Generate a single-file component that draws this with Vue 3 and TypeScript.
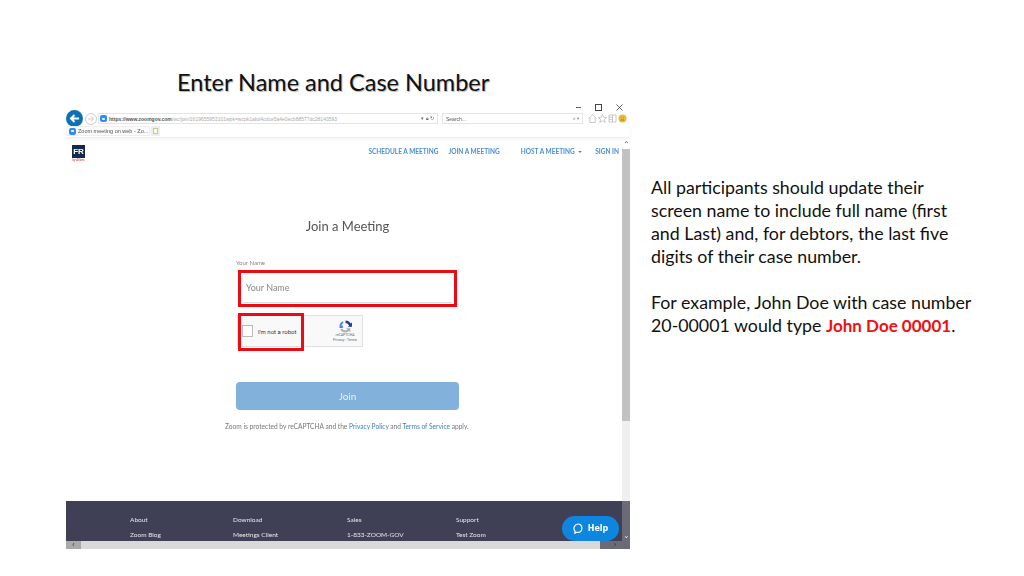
<script setup lang="ts">
const footerColumns = [
  { title: 'About', links: ['Zoom Blog', 'Customers'] },
  { title: 'Download', links: ['Meetings Client', 'Zoom Rooms Client'] },
  { title: 'Sales', links: ['1-833-ZOOM-GOV', 'Contact Sales'] },
  { title: 'Support', links: ['Test Zoom', 'Account'] },
]
</script>

<template>
  <div class="slide">
    <h1 class="title">Enter Name and Case Number</h1>
    <div class="content">
      <div class="browser">
        <div class="window-controls">
          <span class="win-min"></span>
          <span class="win-max"></span>
          <svg class="win-close" width="7" height="7" viewBox="0 0 7 7">
            <path d="M.5.5l6 6M6.500.5l-6 6" stroke="#444" stroke-width=".8" />
          </svg>
        </div>
        <div class="toolbar">
          <svg class="back" width="17" height="17" viewBox="0 0 17 17">
            <circle cx="8.500" cy="8.500" r="8.500" fill="#0e6fb5" />
            <path d="M13 8.500H5M8.500 5L5 8.500 8.500 12" fill="none" stroke="#fff" stroke-width="2" />
          </svg>
          <svg class="forward" width="12" height="12" viewBox="0 0 12 12">
            <circle cx="6" cy="6" r="5.500" fill="#fff" stroke="#ccc" />
            <path d="M3 6h5M6 3.500L8.500 6 6 8.500" fill="none" stroke="#ccc" />
          </svg>
          <div class="address">
            <span class="zoom-icon"></span>
            <span class="url"><b>https://www.zoomgov.com</b>/wc/join/1619655953101wpk=wcpk1abd4cdce5a4e0ecb88577dc28143593</span>
            <span class="address-tools">▾ 🔒︎ ↻</span>
          </div>
          <div class="search">
            <span>Search...</span>
            <span class="search-tools">⌕ ▾</span>
          </div>
          <div class="tools">
            <svg width="9" height="9" viewBox="0 0 9 9"><path d="M.5 4.500L4.500.8l4 3.700M1.800 4v4.500h5.400V4" fill="none" stroke="#bbb" stroke-width=".8" /></svg>
            <svg width="9" height="9" viewBox="0 0 9 9"><path d="M4.500.5l1.200 2.800 3 .2-2.300 1.900.8 3-2.700-1.600-2.700 1.600.8-3L.3 3.500l3-.2z" fill="none" stroke="#bbb" stroke-width=".8" /></svg>
            <svg width="9" height="9" viewBox="0 0 9 9"><path d="M1 1h7v7H1zM4.500 1v7M1 3.300h3.500M1 5.600h3.500" fill="none" stroke="#bbb" stroke-width=".8" /></svg>
            <svg width="9" height="9" viewBox="0 0 9 9"><circle cx="4.500" cy="4.500" r="4" fill="#e8b93a" /><path d="M3 3.500h.5M5.500 3.500H6M3 6h3" stroke="#8a6a12" stroke-width=".7" /></svg>
          </div>
        </div>
        <div class="tabs">
          <div class="tab">
            <span class="zoom-icon"></span>
            <span>Zoom meeting on web - Zo...</span>
            <span class="tab-close">×</span>
          </div>
          <div class="new-tab"><span></span></div>
        </div>
        <div class="viewport">
          <div class="page-row">
            <div class="page">
              <header class="site-header">
                <div class="logo">
                  <div class="logo-mark">FR</div>
                  <div class="logo-sub">by Alliant</div>
                </div>
                <nav class="nav">
                  <a class="nav-schedule">SCHEDULE A MEETING</a>
                  <a class="nav-join">JOIN A MEETING</a>
                  <a class="nav-host">HOST A MEETING <i class="caret"></i></a>
                  <a class="nav-sign">SIGN IN</a>
                </nav>
              </header>
              <main class="join">
                <h2 class="join-title">Join a Meeting</h2>
                <label class="name-label">Your Name</label>
                <div class="name-input"><span>Your Name</span></div>
                <div class="recaptcha">
                  <span class="check"></span>
                  <span class="robot">I'm not a robot</span>
                  <div class="recaptcha-brand">
                    <svg width="13" height="13" viewBox="0 0 13 13">
                      <path d="M6.500.5a6 6 0 0 1 5.200 3l1.300-1v4.200H8.800l1.300-1.300a3.900 3.900 0 0 0-3.600-2.500z" fill="#1c3aa9" />
                      <path d="M.5 6.500a6 6 0 0 1 3-5.200l1 1.500a3.900 3.900 0 0 0-1.900 3.700l1.300-1.300v2.800H.5z" fill="#4285f4" />
                      <path d="M6.500 12.500a6 6 0 0 1-5.200-3l1.700-1a3.900 3.900 0 0 0 3.500 2l2-1-1.400-1.300h4.200v4l-1.300-1.200a6 6 0 0 1-3.500 1.500z" fill="#ababab" />
                    </svg>
                    <span class="brand-name">reCAPTCHA</span>
                    <span class="brand-links">Privacy - Terms</span>
                  </div>
                  <div class="red-box robot-box"></div>
                </div>
                <button class="join-btn">Join</button>
                <p class="protected">Zoom is protected by reCAPTCHA and the <a>Privacy Policy</a> and <a>Terms of Service</a> apply.</p>
              </main>
              <footer class="site-footer">
                <div v-for="col in footerColumns" :key="col.title" class="footer-col">
                  <div class="footer-title">{{ col.title }}</div>
                  <div v-for="link in col.links" :key="link" class="footer-link">{{ link }}</div>
                </div>
              </footer>
              <div class="help">
                <svg width="11" height="11" viewBox="0 0 11 11">
                  <path d="M5.500 1a4.300 4.300 0 0 1 0 8.400H2.800l-.9 1 .1-2.300A4.300 4.300 0 0 1 5.500 1z" fill="none" stroke="#fff" stroke-width="1.200" />
                </svg>
                <span>Help</span>
              </div>
            </div>
            <div class="v-scroll">
              <span class="v-up">⌃</span>
              <div class="v-thumb"></div>
              <div class="v-track"></div>
              <span class="v-down">⌄</span>
            </div>
          </div>
          <div class="h-scroll">
            <span class="h-left">‹</span>
            <div class="h-thumb"></div>
            <span class="h-right">›</span>
          </div>
        </div>
      </div>
      <div class="notes">
        <p>All participants should update their screen name to include full name (first and Last) and, for debtors, the last five digits of their case number.</p>
        <p>For example, John Doe with case number 20-00001 would type <strong>John Doe 00001</strong>.</p>
      </div>
    </div>
  </div>
</template>

<style scoped>
.slide {
  width: 1024px;
  height: 576px;
  overflow: hidden;
  background: #fff;
  font-family: Lato, sans-serif;
  box-sizing: border-box;
  padding-top: 66px;
}

.title {
  margin: 0 0 0 177px;
  font-size: 23.5px;
  line-height: 32px;
  font-weight: 400;
  color: #111;
  text-shadow: 1px 1px 1px rgba(0, 0, 0, 0.3);
}

.content {
  display: flex;
  margin-top: 5px;
  padding-left: 65px;
}

.browser {
  width: 565px;
  height: 446px;
  flex: none;
  display: flex;
  flex-direction: column;
  font-family: "Liberation Sans", sans-serif;
  filter: blur(0.35px);
}

.window-controls {
  height: 8px;
  display: flex;
  justify-content: flex-end;
  align-items: center;
  gap: 14px;
  padding-right: 7px;
}

.win-min { width: 5px; height: 1px; background: #666; }
.win-max { width: 5px; height: 5px; border: 1px solid #444; }

.toolbar {
  height: 15px;
  display: flex;
  align-items: center;
  padding-left: 1px;
}

.forward { margin-left: 2px; }

.address,
.search {
  height: 11px;
  display: flex;
  align-items: center;
  background: #fff;
  border: 1px solid #e4e4e4;
  font-size: 5px;
  color: #777;
  box-sizing: border-box;
}

.address {
  width: 340px;
  margin-left: 1px;
  padding: 0 3px 0 1px;
  gap: 2px;
}

.url {
  flex: 1;
  white-space: nowrap;
  overflow: hidden;
  color: #aaa;
}

.url b { color: #555; }
.address-tools { color: #666; }

.search {
  width: 141px;
  margin-left: 4px;
  padding: 0 3px;
  justify-content: space-between;
  color: #555;
  font-size: 5px;
}

.tools {
  display: flex;
  gap: 1px;
  margin-left: 5px;
}

.zoom-icon {
  position: relative;
  display: inline-block;
  flex: none;
  width: 7px;
  height: 7px;
  border-radius: 2px;
  background: #2d8cff;
}

.zoom-icon::after {
  content: "";
  position: absolute;
  left: 2px;
  top: 2.5px;
  width: 3px;
  height: 2px;
  background: #fff;
  border-radius: 1px;
}

.tabs {
  height: 11px;
  display: flex;
  align-items: flex-start;
  padding-left: 1px;
  box-shadow: 0 2px 3px rgba(0, 0, 0, 0.07);
  position: relative;
}

.tab {
  width: 84px;
  height: 10px;
  display: flex;
  align-items: center;
  gap: 2px;
  box-sizing: border-box;
  padding: 0 2px;
  background: #fbfbfb;
  border: 1px solid #eeeeee;
  font-size: 5.500px;
  color: #555;
  white-space: nowrap;
}

.tab-close { margin-left: auto; font-size: 6px; }

.new-tab {
  width: 9px;
  height: 10px;
  margin-left: 1px;
  background: #eee;
  display: flex;
  justify-content: center;
  align-items: center;
}

.new-tab span {
  width: 5px;
  height: 6px;
  background: #fffbe0;
  border: 1px solid #c8c8a0;
  box-sizing: border-box;
}

.viewport {
  flex: 1;
  display: flex;
  flex-direction: column;
  min-height: 0;
}

.page-row {
  flex: 1;
  display: flex;
  min-height: 0;
}

.page {
  position: relative;
  width: 557px;
  margin-left: 1px;
  display: flex;
  flex-direction: column;
  font-family: Lato, sans-serif;
  overflow: hidden;
}

.site-header {
  height: 42px;
  display: flex;
  align-items: flex-start;
  flex: none;
  padding: 8px 3px 0 6px;
  box-sizing: border-box;
}

.logo {
  width: 13px;
  display: flex;
  flex-direction: column;
  align-items: center;
}

.logo-mark {
  width: 13px;
  height: 13px;
  background: #15294b;
  color: #fff;
  font-size: 8px;
  line-height: 13px;
  font-weight: 900;
  text-align: center;
  font-family: "Liberation Sans", sans-serif;
}

.logo-sub {
  font-size: 3px;
  line-height: 5px;
  white-space: nowrap;
  color: #c8303a;
}

.nav {
  margin-left: auto;
  display: flex;
  padding-top: 3px;
  font-size: 6.500px;
  line-height: 8px;
  font-weight: 700;
  color: #4a8ed4;
  white-space: nowrap;
}

.nav-join { margin-left: 10px; }
.nav-host { margin-left: 21px; }
.nav-sign { margin-left: 13px; }

.caret {
  display: inline-block;
  margin-left: 2px;
  vertical-align: middle;
  border: 2px solid transparent;
  border-top-color: #4a8ed4;
  border-bottom: 0;
}

.join {
  flex: 1;
  display: flex;
  flex-direction: column;
  align-items: flex-start;
  padding-left: 170px;
  min-height: 0;
}

.join-title {
  margin: 38px 0 0;
  width: 223px;
  text-align: center;
  font-size: 13px;
  line-height: 18px;
  font-weight: 400;
  color: #555;
}

.name-label {
  margin-top: 24px;
  font-size: 6px;
  line-height: 8px;
  color: #888;
}

.name-input {
  width: 219px;
  height: 37px;
  margin: 3px 0 0 2px;
  box-sizing: border-box;
  border: 3px solid #ed0a12;
  padding: 0 2px;
  position: relative;
  display: flex;
  align-items: center;
  font-size: 9px;
  color: #888;
}

.name-input span {
  flex: 1;
  height: 28px;
  line-height: 28px;
  padding-left: 3px;
  border-bottom: 1px solid #ddd;
}

.recaptcha {
  position: relative;
  width: 126px;
  height: 32px;
  margin: 8px 0 0 1px;
  flex: none;
  box-sizing: border-box;
  background: #f9f9f9;
  border: 1px solid #e0e0e0;
  display: flex;
  align-items: center;
  padding-left: 4px;
  font-family: Roboto, sans-serif;
}

.check {
  width: 11px;
  height: 12px;
  box-sizing: border-box;
  background: #fff;
  border: 1px solid #bbb;
}

.robot {
  margin-left: 5px;
  font-size: 6px;
  color: #333;
}

.recaptcha-brand {
  margin-left: auto;
  width: 34px;
  display: flex;
  flex-direction: column;
  align-items: center;
  font-size: 3.500px;
  line-height: 5px;
  color: #666;
}

.brand-links { white-space: nowrap; }

.red-box {
  position: absolute;
  box-sizing: border-box;
  border: 3px solid #ed0a12;
}

.robot-box {
  left: 0;
  top: -3px;
  width: 66px;
  height: 38px;
}

.join-btn {
  width: 223px;
  height: 28px;
  margin-top: 35px;
  padding: 0;
  border: 0;
  border-radius: 4px;
  background: #82b2dc;
  color: #e8f0f8;
  font-family: Lato, sans-serif;
  font-size: 10px;
  flex: none;
}

.protected {
  margin: 12px 0 0 -11px;
  font-size: 6.600px;
  line-height: 8px;
  color: #777;
  white-space: nowrap;
}

.protected a {
  color: #3b7cc6;
}

.site-footer {
  height: 40px;
  flex: none;
  background: #3f4056;
  display: flex;
  padding: 15px 0 0 64px;
  box-sizing: border-box;
  font-size: 6.500px;
  line-height: 8px;
  color: #e6e6ec;
  overflow: hidden;
}

.footer-col { width: 103px; }
.footer-col:nth-child(2) { width: 114px; }
.footer-col:nth-child(3) { width: 109px; }

.footer-link { margin-top: 7px; }

.help {
  position: absolute;
  right: 3px;
  bottom: 0;
  width: 57px;
  height: 25px;
  border-radius: 13px;
  background: #0e86e0;
  color: #fff;
  display: flex;
  align-items: center;
  justify-content: center;
  gap: 4px;
  font-family: "DejaVu Sans", sans-serif;
  font-size: 8px;
  font-weight: 700;
}

.v-scroll {
  width: 8px;
  display: flex;
  flex-direction: column;
  background: #f0f0f0;
  margin-top: 3px;
  color: #555;
  font-size: 8px;
  line-height: 10px;
  text-align: center;
}

.v-up { height: 9px; flex: none; background: #fff; }
.v-thumb { height: 272px; background: #c2c2c2; flex: none; }
.v-track { flex: 1; }
.v-down {
  height: 40px;
  flex: none;
  display: flex;
  align-items: flex-end;
  justify-content: center;
  background: #6b6b78;
  color: #ddd;
}

.h-scroll {
  height: 8px;
  flex: none;
  display: flex;
  margin-left: 1px;
  font-size: 7px;
  line-height: 8px;
  text-align: center;
  color: #333;
}

.h-left { width: 15px; background: #a9a9a9; }
.h-thumb { flex: 1; background: #d9d9d9; }
.h-right { width: 30px; background: #6b6b78; }

.notes {
  width: 325px;
  flex: none;
  margin: 73px 0 0 21px;
  font-family: Lato, sans-serif;
  font-size: 17.800px;
  line-height: 23px;
  color: #111;
}

.notes p { margin: 0 0 23px; }
.notes strong { color: #ee1111; font-weight: 700; font-size: 17px; }
</style>
